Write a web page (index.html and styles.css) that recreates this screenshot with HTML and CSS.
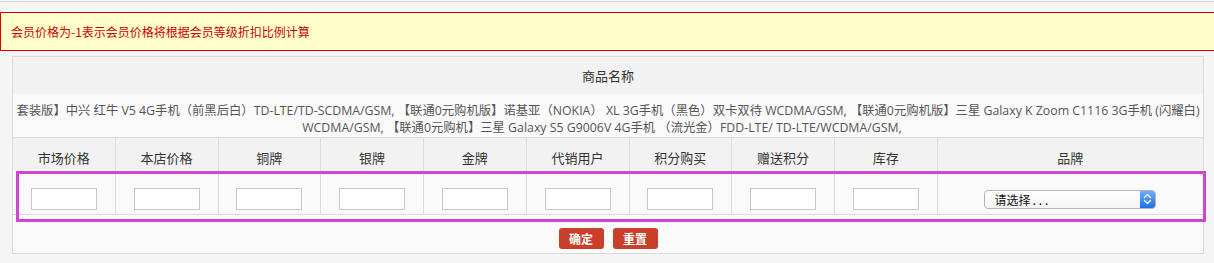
FILE: index.html
```html
<!DOCTYPE html>
<html lang="zh-CN">
<head>
<meta charset="utf-8">
<title>商品会员价格</title>
<link rel="stylesheet" href="styles.css">
</head>
<body>
<div class="topline"></div>
<div class="alert">会员价格为-1表示会员价格将根据会员等级折扣比例计算</div>
<div class="panel">
  <div class="title-row">商品名称</div>
  <div class="products">
    <span class="line">套装版】中兴 红牛 V5 4G手机（前黑后白）TD-LTE/TD-SCDMA/GSM, 【联通0元购机版】诺基亚（NOKIA） XL 3G手机（黑色）双卡双待 WCDMA/GSM, 【联通0元购机版】三星 Galaxy K Zoom C1116 3G手机 (闪耀白)</span>
    <span class="line line-2">WCDMA/GSM, 【联通0元购机】三星 Galaxy S5 G9006V 4G手机 （流光金）FDD-LTE/ TD-LTE/WCDMA/GSM,</span>
  </div>
  <div class="grid">
    <div class="th">市场价格</div>
    <div class="th">本店价格</div>
    <div class="th">铜牌</div>
    <div class="th">银牌</div>
    <div class="th">金牌</div>
    <div class="th">代销用户</div>
    <div class="th">积分购买</div>
    <div class="th">赠送积分</div>
    <div class="th">库存</div>
    <div class="th last">品牌</div>
    <div class="td"><input class="field" type="text"></div>
    <div class="td"><input class="field" type="text"></div>
    <div class="td"><input class="field" type="text"></div>
    <div class="td"><input class="field" type="text"></div>
    <div class="td"><input class="field" type="text"></div>
    <div class="td"><input class="field" type="text"></div>
    <div class="td"><input class="field" type="text"></div>
    <div class="td"><input class="field" type="text"></div>
    <div class="td"><input class="field" type="text"></div>
    <div class="td last">
      <div class="select">
        <span class="select-text">请选择<span class="dots">...</span></span>
        <span class="select-btn">
          <svg width="9" height="12" viewBox="0 0 9 12"><path d="M1.5 4.5 L4.5 1.5 L7.5 4.5 M1.5 7.5 L4.5 10.5 L7.5 7.5" fill="none" stroke="#fff" stroke-width="1.4" stroke-linecap="round" stroke-linejoin="round"/></svg>
        </span>
      </div>
    </div>
  </div>
  <div class="actions">
    <button class="btn" type="button">确定</button>
    <button class="btn" type="button">重置</button>
  </div>
  <div class="highlight"></div>
</div>
</body>
</html>
```
FILE: styles.css
```css
* { box-sizing: border-box; }
html, body { margin: 0; padding: 0; }
body {
  background: #f5f5f5;
  font-family: "Open Sans", "Noto Sans CJK SC", sans-serif;
  font-size: 13px;
  color: #333;
  overflow: hidden;
}
.topline {
  margin-top: 1px;
  height: 1px;
  background: #dcdcdc;
}
.alert {
  margin: 10px -4px 0 0;
  height: 39px;
  border: 1px solid #d40000;
  background: #ffffcc;
  color: #cc0000;
  padding-left: 10px;
  line-height: 37px;
  font-family: "Noto Sans CJK SC", sans-serif;
  font-size: 12px;
}
.panel {
  position: relative;
  margin: 5px 0 0 12px;
  width: 1192px;
  border: 1px solid #dadada;
  background: #fafafa;
}
.title-row {
  height: 37px;
  line-height: 37px;
  text-align: center;
  background: #f2f2f2;
  font-family: "Noto Sans CJK SC", sans-serif;
  color: #333;
}
.products {
  padding: 8px 0 1px;
  border-bottom: 1px solid #dcdcdc;
  text-align: center;
  color: #555;
  line-height: 17px;
  font-size: 12.33px;
}
.line {
  display: block;
  white-space: nowrap;
}
.line-2 { padding-right: 12px; }
.grid {
  display: grid;
  grid-template-columns: repeat(9, 102.75px) 1fr;
}
.th {
  height: 32px;
  padding-top: 11px;
  line-height: 17px;
  text-align: center;
  background: #f2f2f2;
  border-right: 1px solid #dcdcdc;
  font-family: "Noto Sans CJK SC", sans-serif;
  color: #333;
}
.td {
  height: 45px;
  padding: 18px 0 4px;
  display: flex;
  justify-content: center;
  align-items: center;
  border-right: 1px solid #dcdcdc;
  border-bottom: 1px solid #dcdcdc;
}
.last { border-right: none; }
.field {
  width: 66px;
  height: 22px;
  border: 1px solid #c8c8c8;
  background: #fff;
  padding: 0;
  margin: 0;
}
.select {
  display: flex;
  width: 172px;
  height: 19px;
  border: 1px solid #b4b4b4;
  border-radius: 4px;
  background: linear-gradient(#ffffff, #f4f4f4);
  overflow: hidden;
}
.select-text {
  flex: 1;
  padding-left: 9px;
  font-family: "Noto Sans CJK SC", sans-serif;
  font-size: 12px;
  line-height: 17px;
  color: #111;
}
.dots {
  letter-spacing: 3px;
  padding-left: 2px;
}
.select-btn {
  width: 15px;
  display: flex;
  align-items: center;
  justify-content: center;
  background: linear-gradient(#6aaefc, #1c6fec);
}
.actions {
  height: 38px;
  padding-top: 13px;
  display: flex;
  justify-content: center;
  gap: 9px;
}
.btn {
  width: 45px;
  height: 21px;
  border: none;
  border-radius: 3px;
  background: #c8402b;
  color: #fff;
  font-family: "Noto Sans CJK SC", sans-serif;
  font-weight: bold;
  font-size: 12px;
  padding: 0;
  line-height: 21px;
}
.highlight {
  position: absolute;
  left: 3px;
  top: 114px;
  width: 1190px;
  height: 51px;
  border: 3px solid #d244d2;
  pointer-events: none;
}
```
